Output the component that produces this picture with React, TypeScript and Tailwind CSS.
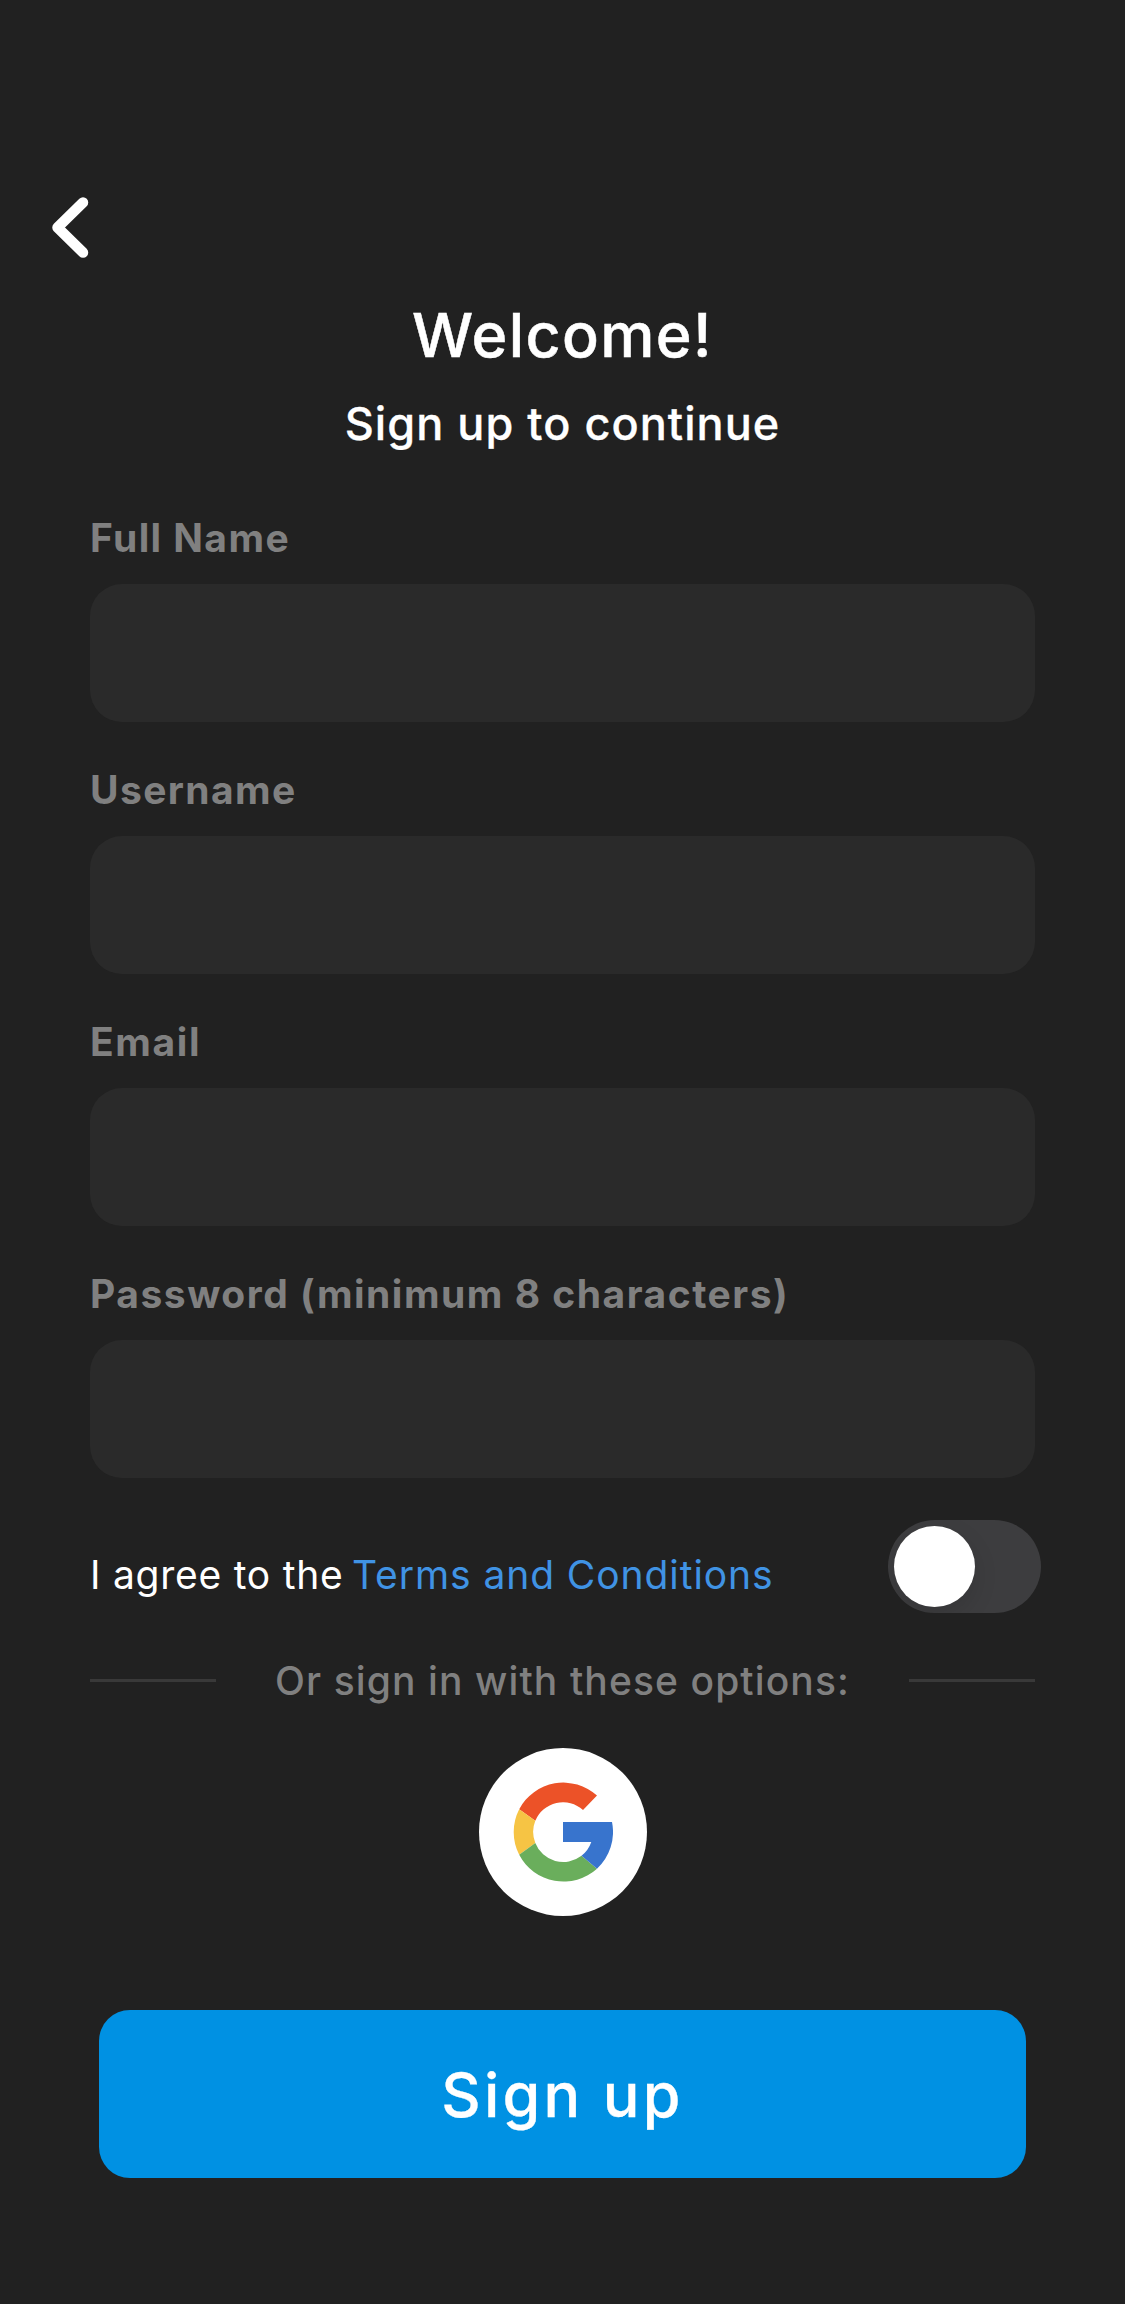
import { useState } from 'react';

const fields = [
  { id: 'fullName', label: 'Full Name', type: 'text', tracking: 'tracking-[1.4px]' },
  { id: 'username', label: 'Username', type: 'text', tracking: 'tracking-[1.39px]' },
  { id: 'email', label: 'Email', type: 'email', tracking: 'tracking-[1.6px]' },
  { id: 'password', label: 'Password (minimum 8 characters)', type: 'password', tracking: 'tracking-[1.51px]' },
];

function BackIcon() {
  return (
    <svg width="46" height="72" viewBox="0 0 46 72" fill="none" aria-hidden="true">
      <path
        d="M38 10.5 12.5 35.5 38 60.5"
        stroke="#fff"
        strokeWidth="10.5"
        strokeLinecap="round"
        strokeLinejoin="round"
      />
    </svg>
  );
}

function GoogleIcon() {
  return (
    <svg width="100" height="100" viewBox="0 0 100 100" aria-hidden="true">
      <path d="M6.2 27.2A50 50 0 0 1 84 13.6L70 28A30 30 0 0 0 22.3 38.7Z" fill="#ec5228" />
      <path d="M6.2 27.2A50 50 0 0 0 6.2 72.8L22.3 60.9A30 30 0 0 1 22.3 38.7Z" fill="#f6c444" />
      <path d="M6.2 72.8A50 50 0 0 0 84 86.7L68.5 73.8A30 30 0 0 1 22.3 60.9Z" fill="#6aae5c" />
      <path d="M50 40H99A50 50 0 0 1 84 86.7L68.5 73.8A30 30 0 0 0 78.3 60H50Z" fill="#3874cd" />
    </svg>
  );
}

export default function App() {
  const [agreed, setAgreed] = useState(false);

  return (
    <main className="flex h-[2304px] w-[1125px] flex-col bg-[#212121] px-[90px] pt-48 font-['Inter',sans-serif] text-white">
      <button type="button" aria-label="Back" className="-ml-[45px] h-[72px] w-[46px]">
        <BackIcon />
      </button>

      <h1 className="mt-[35px] text-center text-[61px] leading-[72px] font-medium tracking-[1.4px] [-webkit-text-stroke:0.5px_currentColor]">
        Welcome!
      </h1>
      <p className="mt-[26px] text-center text-[45px] leading-[54px] font-medium tracking-[1.04px] [-webkit-text-stroke:0.3px_currentColor]">
        Sign up to continue
      </p>

      <form className="mt-[63px] flex flex-col gap-11">
        {fields.map((field) => (
          <div key={field.id} className="flex flex-col gap-[23px]">
            <label
              htmlFor={field.id}
              className={`text-[39px] leading-[47px] font-bold text-[#808080] ${field.tracking}`}
            >
              {field.label}
            </label>
            <input
              id={field.id}
              type={field.type}
              className="h-[138px] rounded-[32px] bg-[#2a2a2a] px-8 text-[39px] outline-none"
            />
          </div>
        ))}
      </form>

      <div className="-mr-1.5 mt-[42px] flex h-[93px] items-start justify-between">
        <p className="flex pt-[31px] text-[39px] leading-[47px]">
          <span className="w-[262px] whitespace-nowrap tracking-[0.75px]">I agree to the</span>
          <a className="whitespace-nowrap tracking-[0.92px] text-[#4093e4]">Terms and Conditions</a>
        </p>
        <button
          type="button"
          role="switch"
          aria-checked={agreed}
          aria-label="Agree to the terms"
          onClick={() => setAgreed(!agreed)}
          className={`flex h-[93px] w-[153px] overflow-hidden rounded-full p-1.5 ${agreed ? 'justify-end bg-[#0091e3]' : 'bg-[#3d3d3f]'}`}
        >
          <span className="size-[81px] rounded-full bg-white shadow-[0_9px_24px_rgba(0,0,0,0.12)]" />
        </button>
      </div>

      <div className="mt-11 flex items-center justify-between">
        <span className="h-[3px] w-[126px] bg-[#393939]" />
        <span className="text-[39px] leading-[47px] font-medium tracking-[1.1px] text-[#808080]">
          Or sign in with these options:
        </span>
        <span className="h-[3px] w-[126px] bg-[#393939]" />
      </div>

      <button
        type="button"
        aria-label="Sign in with Google"
        className="mt-11 ml-[389px] flex size-[168px] items-center justify-center rounded-full bg-white"
      >
        <GoogleIcon />
      </button>

      <button
        type="button"
        className="mx-[9px] mt-[94px] h-[168px] rounded-[31px] bg-[#0091e3] pt-0.5 text-center text-[61px] leading-[72px] font-medium tracking-[3.2px] [-webkit-text-stroke:0.3px_currentColor]"
      >
        Sign up
      </button>
    </main>
  );
}
